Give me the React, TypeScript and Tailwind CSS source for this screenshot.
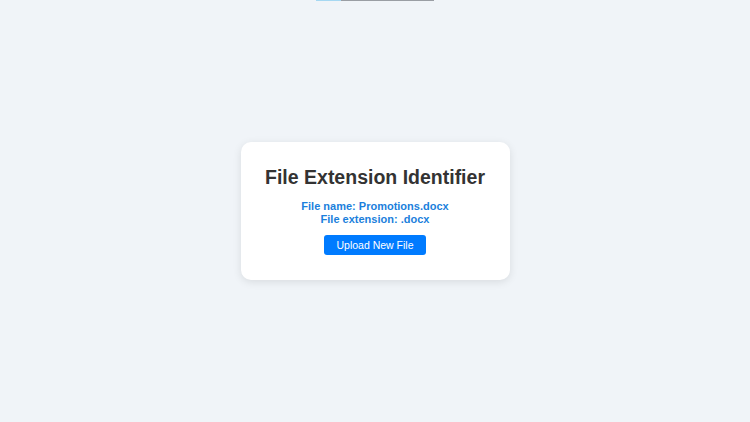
export default function App() {
  const fileName = "Promotions.docx";
  const ext = fileName.slice(fileName.lastIndexOf("."));

  return (
    <div className="relative min-h-screen w-full bg-[#f0f4f8] flex items-center justify-center font-['Liberation_Sans',Arial,sans-serif]">
      {/* thin progress strip peeking at the top */}
      <div className="absolute top-0 left-[316px] flex h-px w-[118px]">
        <div className="w-[25px] bg-[#a6d8f2]" />
        <div className="flex-1 bg-[#9a9ea4]" />
      </div>

      <div className="w-[269px] rounded-[10px] bg-white px-5 pt-6 pb-[25px] shadow-[0_2px_8px_rgba(0,0,0,0.1)] flex flex-col items-center text-center">
        <h1 className="whitespace-nowrap text-[19.5px] leading-[23px] font-bold text-[#333333]">
          File Extension Identifier
        </h1>
        <div className="mt-[11px] flex flex-col items-center text-[11px] leading-[13px] font-bold text-[#1b7fdc]">
          <span>File name: {fileName}</span>
          <span>File extension: {ext}</span>
        </div>
        <button className="mt-[9px] h-5 rounded-[3px] bg-[#007bff] px-[12px] text-[10.5px] leading-5 text-white">
          Upload New File
        </button>
      </div>
    </div>
  );
}
